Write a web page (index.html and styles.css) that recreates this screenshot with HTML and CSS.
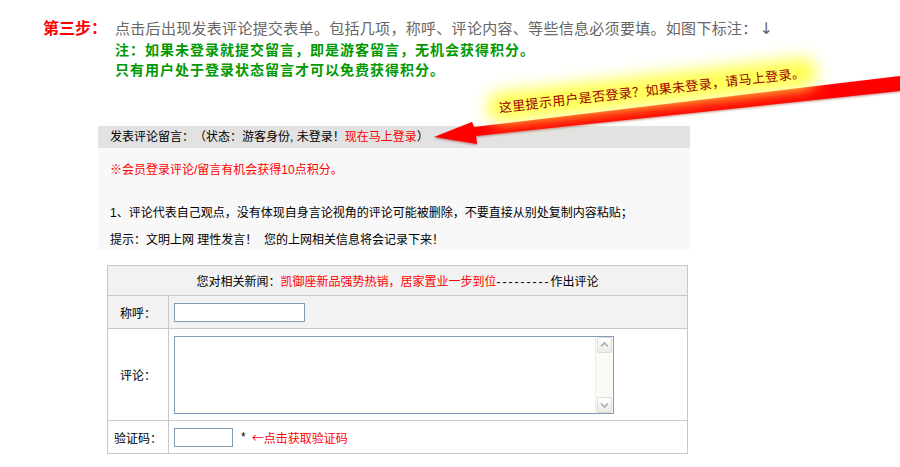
FILE: index.html
```html
<!DOCTYPE html>
<html lang="zh-CN">
<head>
<meta charset="utf-8">
<title>第三步</title>
<link rel="stylesheet" href="styles.css">
</head>
<body>
<div class="page">
  <div class="step">
    <span class="step-label">第三步：</span>
    <span class="step-text">点击后出现发表评论提交表单。包括几项，称呼、评论内容、等些信息必须要填。如图下标注：<span class="down">↓</span></span>
  </div>
  <div class="notes">
    <p>注：如果未登录就提交留言，即是游客留言，无机会获得积分。</p>
    <p>只有用户处于登录状态留言才可以免费获得积分。</p>
  </div>

  <div class="comment-box">
    <div class="box-head">发表评论留言：（状态：游客身份, 未登录！<span class="login">现在马上登录</span>）</div>
    <div class="box-body">
      <p class="tip-red">※会员登录评论/留言有机会获得10点积分。</p>
      <p class="rule">1、评论代表自己观点，没有体现自身言论视角的评论可能被删除，不要直接从别处复制内容粘贴；</p>
      <p class="rule2">提示：文明上网 理性发言！&nbsp;&nbsp;您的上网相关信息将会记录下来！</p>
    </div>
  </div>

  <table class="form">
    <tr class="row-head">
      <td colspan="2">您对相关新闻：<span class="red">凯御座新品强势热销，居家置业一步到位</span><span class="dashes">---------</span>作出评论</td>
    </tr>
    <tr class="row-name">
      <td class="label">称呼：</td>
      <td class="field"><span class="input name-input"></span></td>
    </tr>
    <tr class="row-comment">
      <td class="label">评论：</td>
      <td class="field">
        <div class="textarea">
          <div class="scrollbar">
            <span class="sb-btn"><svg viewBox="0 0 15 16" width="15" height="16"><path d="M4 9.5 L7.5 6 L11 9.5" fill="none" stroke="#a9aab0" stroke-width="1.6"/></svg></span>
            <span class="sb-btn"><svg viewBox="0 0 15 16" width="15" height="16"><path d="M4 6.5 L7.5 10 L11 6.5" fill="none" stroke="#a9aab0" stroke-width="1.6"/></svg></span>
          </div>
        </div>
      </td>
    </tr>
    <tr class="row-code">
      <td class="label">验证码：</td>
      <td class="field"><span class="input code-input"></span><span class="star">*</span><span class="red get-code"><span class="left-arrow">←</span>点击获取验证码</span></td>
    </tr>
  </table>

  <svg class="arrow" viewBox="0 0 900 467" width="900" height="467">
    <polygon points="900,76 474,127 472,122 434,137 477,144 476,136 900,91" fill="#ff0000"/>
  </svg>
  <div class="callout"><span>这里提示用户是否登录？如果未登录，请马上登录。</span></div>
</div>
</body>
</html>
```

FILE: styles.css
```css
body {
  margin: 0;
  background: #fff;
  color: #000;
  font-family: "Liberation Sans", "Noto Sans CJK SC", sans-serif;
  font-size: 12px;
  text-spacing-trim: space-all;
}

p { margin: 0; }

.page {
  position: relative;
  width: 900px;
  height: 467px;
  overflow: hidden;
}

.step {
  display: flex;
  padding: 18px 0 0 43px;
  line-height: 22px;
}

.step-label {
  width: 72px;
  color: #ff0000;
  font-weight: bold;
  font-size: 16px;
}

.step-text {
  color: #666;
  font-size: 15px;
  letter-spacing: 0.3px;
}

.down {
  font-family: "DejaVu Sans", sans-serif;
  font-size: 16px;
  margin-left: 2px;
}

.notes {
  padding-left: 115px;
  color: #009900;
  font-weight: bold;
  font-size: 14px;
  letter-spacing: 1px;
  line-height: 20px;
}

.comment-box {
  margin: 46px 0 0 98px;
  width: 592px;
  background: #f8f8f8;
}

.box-head {
  height: 22px;
  line-height: 22px;
  padding-left: 12px;
  background: #e2e2e2;
}

.login, .red { color: #ff0000; }

.box-body {
  padding: 12px 0 0 12px;
  line-height: 20px;
}

.tip-red { color: #ff0000; }
.rule { margin-top: 23px; }
.rule2 { margin-top: 7px; }

.form {
  margin: 15px 0 0 107px;
  width: 581px;
  border-collapse: collapse;
}

.form td {
  border: 1px solid #c8c8c8;
  padding: 0;
  vertical-align: middle;
}

.row-head td {
  height: 29px;
  text-align: center;
  background: #f2f2f2;
}

.dashes { letter-spacing: 2px; }

.row-name td {
  height: 32px;
  background: #f2f2f2;
}

.row-comment td { height: 91px; }
.row-code td { height: 32px; }

.form td.label {
  width: 60px;
  text-align: center;
}

.form td.field {
  padding-left: 5px;
}

.input {
  display: inline-block;
  box-sizing: border-box;
  height: 19px;
  border: 1px solid #7f9db9;
  background: #fff;
  vertical-align: middle;
}

.name-input { width: 131px; }
.code-input { width: 59px; }

.star {
  display: inline-block;
  margin-left: 8px;
  vertical-align: middle;
}

.get-code {
  display: inline-block;
  margin-left: 6px;
  vertical-align: middle;
}

.left-arrow {
  font-family: "Noto Sans CJK SC", sans-serif;
}

.textarea {
  box-sizing: border-box;
  width: 440px;
  height: 78px;
  border: 1px solid #7f9db9;
  background: #fff;
  display: flex;
  justify-content: flex-end;
}

.scrollbar {
  width: 17px;
  background: #fbfbf6;
  border-left: 1px solid #eeeee6;
  display: flex;
  flex-direction: column;
  justify-content: space-between;
  align-items: center;
}

.sb-btn {
  display: block;
  width: 15px;
  height: 16px;
  box-sizing: border-box;
  border: 1px solid #dcdcd4;
  border-radius: 2px;
  background: linear-gradient(#ffffff, #ecece4);
}

.sb-btn svg { display: block; margin: -1px; }

.arrow {
  position: absolute;
  left: 0;
  top: 0;
  pointer-events: none;
  filter: drop-shadow(0 1px 1px rgba(120, 0, 0, 0.45));
}

.callout {
  position: absolute;
  left: 652px;
  top: 90px;
  transform: translate(-50%, -50%) rotate(-6.5deg);
  white-space: nowrap;
}

.callout::before {
  content: "";
  position: absolute;
  left: -12px;
  right: -12px;
  top: -6px;
  bottom: -6px;
  background: #ffff50;
  border-radius: 16px;
  filter: blur(8px);
}

.callout span {
  position: relative;
  color: #9b0000;
  font-size: 13px;
  letter-spacing: 0.4px;
  line-height: 18px;
  font-family: "Noto Sans CJK SC", sans-serif;
}
```
